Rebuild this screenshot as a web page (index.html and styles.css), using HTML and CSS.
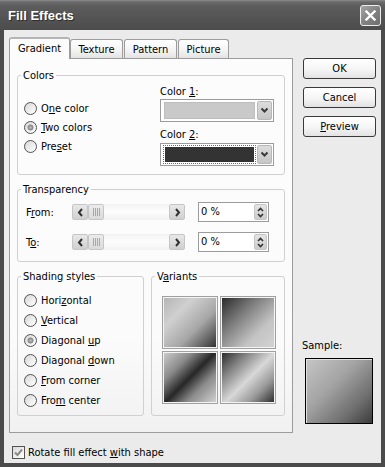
FILE: index.html
```html
<!DOCTYPE html>
<html>
<head>
<meta charset="utf-8">
<title>Fill Effects</title>
<link rel="stylesheet" href="styles.css">
</head>
<body>
<div class="window">
  <div class="titlebar">
    <span class="title">Fill Effects</span>
    <div class="close"><svg width="11" height="11" viewBox="0 0 11 11"><path d="M1.5 1.5 L9.5 9.5 M9.5 1.5 L1.5 9.5" stroke="#fff" stroke-width="2.3" stroke-linecap="square"/></svg></div>
  </div>
  <div class="client">
    <div class="tabs">
      <div class="tab tab-gradient active">Gradient</div>
      <div class="tab tab-texture">Texture</div>
      <div class="tab tab-pattern">Pattern</div>
      <div class="tab tab-picture">Picture</div>
    </div>

    <div class="panel">
      <fieldset class="group">
        <legend>Colors</legend>
        <div class="colors-body">
          <div class="radios colors-radios">
            <div class="radio"><span class="rb"></span><span>O<u>n</u>e color</span></div>
            <div class="radio"><span class="rb checked"></span><span><u>T</u>wo colors</span></div>
            <div class="radio"><span class="rb"></span><span>Pre<u>s</u>et</span></div>
          </div>
          <div class="pickers">
            <div class="lbl">Color <u>1</u>:</div>
            <div class="combo">
              <span class="swatch swatch-light"></span>
              <span class="drop"><svg width="9" height="7" viewBox="0 0 9 7"><path d="M1.5 1.5 L4.5 4.5 L7.5 1.5" fill="none" stroke="#3a3a3a" stroke-width="2"/></svg></span>
            </div>
            <div class="lbl lbl2">Color <u>2</u>:</div>
            <div class="combo combo2">
              <span class="swatch swatch-dark"></span>
              <span class="drop"><svg width="9" height="7" viewBox="0 0 9 7"><path d="M1.5 1.5 L4.5 4.5 L7.5 1.5" fill="none" stroke="#3a3a3a" stroke-width="2"/></svg></span>
            </div>
          </div>
        </div>
      </fieldset>

      <fieldset class="group">
        <legend>Transparency</legend>
        <div class="trows">
          <div class="trow">
            <span class="tlabel">F<u>r</u>om:</span>
            <div class="scroll">
              <span class="sbtn"><svg width="7" height="9" viewBox="0 0 7 9"><path d="M5 1 L2 4.5 L5 8" fill="none" stroke="#333" stroke-width="2"/></svg></span>
              <span class="sbtn thumb"><svg width="7" height="8" viewBox="0 0 7 8"><path d="M0.5 0 V8 M2.5 0 V8 M4.5 0 V8 M6.5 0 V8" stroke="#a8a8a8" stroke-width="1"/></svg></span>
              <span class="track"></span>
              <span class="sbtn"><svg width="7" height="9" viewBox="0 0 7 9"><path d="M2 1 L5 4.5 L2 8" fill="none" stroke="#333" stroke-width="2"/></svg></span>
            </div>
            <div class="spin">
              <span class="spin-text">0 %</span>
              <span class="spin-btn">
                <svg width="7" height="5" viewBox="0 0 7 5"><path d="M1 4 L3.5 1.5 L6 4" fill="none" stroke="#333" stroke-width="1.6"/></svg>
                <svg width="7" height="5" viewBox="0 0 7 5"><path d="M1 1 L3.5 3.5 L6 1" fill="none" stroke="#333" stroke-width="1.6"/></svg>
              </span>
            </div>
          </div>
          <div class="trow">
            <span class="tlabel">T<u>o</u>:</span>
            <div class="scroll">
              <span class="sbtn"><svg width="7" height="9" viewBox="0 0 7 9"><path d="M5 1 L2 4.5 L5 8" fill="none" stroke="#333" stroke-width="2"/></svg></span>
              <span class="sbtn thumb"><svg width="7" height="8" viewBox="0 0 7 8"><path d="M0.5 0 V8 M2.5 0 V8 M4.5 0 V8 M6.5 0 V8" stroke="#a8a8a8" stroke-width="1"/></svg></span>
              <span class="track"></span>
              <span class="sbtn"><svg width="7" height="9" viewBox="0 0 7 9"><path d="M2 1 L5 4.5 L2 8" fill="none" stroke="#333" stroke-width="2"/></svg></span>
            </div>
            <div class="spin">
              <span class="spin-text">0 %</span>
              <span class="spin-btn">
                <svg width="7" height="5" viewBox="0 0 7 5"><path d="M1 4 L3.5 1.5 L6 4" fill="none" stroke="#333" stroke-width="1.6"/></svg>
                <svg width="7" height="5" viewBox="0 0 7 5"><path d="M1 1 L3.5 3.5 L6 1" fill="none" stroke="#333" stroke-width="1.6"/></svg>
              </span>
            </div>
          </div>
        </div>
      </fieldset>

      <div class="lower">
        <fieldset class="group">
          <legend>Shading styles</legend>
          <div class="radios shading-radios">
            <div class="radio r20"><span class="rb"></span><span>Hori<u>z</u>ontal</span></div>
            <div class="radio r20"><span class="rb"></span><span><u>V</u>ertical</span></div>
            <div class="radio r20"><span class="rb checked"></span><span>Diagonal <u>u</u>p</span></div>
            <div class="radio r20"><span class="rb"></span><span>Diagonal <u>d</u>own</span></div>
            <div class="radio r20"><span class="rb"></span><span><u>F</u>rom corner</span></div>
            <div class="radio r20"><span class="rb"></span><span>Fro<u>m</u> center</span></div>
          </div>
        </fieldset>
        <fieldset class="group">
          <legend>V<u>a</u>riants</legend>
          <div class="variants">
            <span class="tile tile1"></span>
            <span class="tile tile2"></span>
            <span class="tile tile3"></span>
            <span class="tile tile4"></span>
          </div>
        </fieldset>
      </div>
    </div>

    <div class="side">
      <div class="btn">OK</div>
      <div class="btn">Cancel</div>
      <div class="btn"><u>P</u>review</div>
      <div class="sample">
        <div class="sample-label">Sample:</div>
        <div class="sample-box"></div>
      </div>
    </div>

    <div class="bottom">
      <span class="cb"><svg width="9" height="9" viewBox="0 0 9 9"><path d="M1 4.5 L3.5 7 L8 1.5" fill="none" stroke="#8a8a8a" stroke-width="2"/></svg></span>
      <span>Rotate fill effect <u>w</u>ith shape</span>
    </div>
  </div>
</div>
</body>
</html>
```

FILE: styles.css
```css
* { box-sizing: border-box; }
html, body { margin: 0; padding: 0; }
body {
  width: 385px;
  height: 467px;
  overflow: hidden;
  font-family: "DejaVu Sans Condensed", "Liberation Sans", Arial, sans-serif;
  font-size: 11px;
  line-height: 13px;
  color: #000;
  background: #4b4b4b;
}
u { text-decoration: underline; text-underline-offset: 1px; }

.window {
  width: 385px;
  height: 467px;
  display: flex;
  flex-direction: column;
  background: #4b4b4b;
}

.titlebar {
  height: 30px;
  flex: none;
  display: flex;
  align-items: center;
  justify-content: space-between;
  padding: 0 4px 0 8px;
  background: linear-gradient(#8c8c8c 0, #6a6a6a 2px, #5c5c5c 6px, #545454 18px, #4c4c4c 30px);
}
.title {
  color: #fff;
  font-family: "Liberation Sans", Arial, sans-serif;
  font-weight: bold;
  font-size: 13px;
  text-shadow: 1px 1px #2e2e2e;
}
.close {
  width: 21px;
  height: 21px;
  border: 1px solid #eeeeee;
  border-radius: 3px;
  background: linear-gradient(135deg, #a4a4a4, #808080 55%, #6e6e6e);
  display: flex;
  align-items: center;
  justify-content: center;
}

.client {
  flex: 1;
  margin: 0 4px 4px;
  background: #ebebeb;
  display: grid;
  grid-template-columns: 284px 73px;
  grid-template-rows: 21px 1fr 30px;
  column-gap: 10px;
  padding: 7px 0 0 5px;
}

/* tabs */
.tabs {
  grid-column: 1;
  grid-row: 1;
  display: flex;
  align-items: flex-end;
  position: relative;
  z-index: 1;
}
.tab {
  height: 19px;
  border: 1px solid #9c9c9c;
  border-bottom: none;
  border-radius: 3px 3px 0 0;
  background: linear-gradient(#ffffff, #f3f3f3 60%, #e3e3e3);
  text-align: center;
  line-height: 19px;
}
.tab.active {
  height: 22px;
  margin-bottom: -1px;
  background: #fcfcfc;
  border-top: 2px solid #b4b4b4;
  line-height: 19px;
}
.tab-gradient { width: 61px; }
.tab-texture { width: 53px; }
.tab-pattern { width: 53px; margin-left: 1px; }
.tab-picture { width: 51px; margin-left: 1px; }

/* panel */
.panel {
  grid-column: 1;
  grid-row: 2;
  border: 1px solid #9c9c9c;
  background: linear-gradient(#fcfcfc, #fbfbfb 75%, #f1f1f1);
  padding: 10px 7px 0;
  display: flex;
  flex-direction: column;
  gap: 8px;
}

fieldset.group {
  margin: 0;
  padding: 0;
  border: 1px solid #d0d0d0;
  border-radius: 3px;
  min-width: 0;
}
legend {
  margin-left: 3px;
  padding: 0 2px;
  line-height: 13px;
}

.colors-body {
  display: grid;
  grid-template-columns: 1fr 114px;
  padding: 0 10px 8px 6px;
}
.colors-radios { padding-top: 17px; }
.radio {
  display: flex;
  align-items: center;
  gap: 4px;
  height: 19px;
}
.radio.r20 { height: 20px; }
.rb {
  flex: none;
  width: 13px;
  height: 13px;
  border-radius: 50%;
  border: 1px solid #525252;
  background: linear-gradient(135deg, #d6d6d6, #eeeeee 55%, #ffffff);
}
.rb.checked {
  background:
    radial-gradient(circle at 50% 50%, #c4c4c4 0, #9a9a9a 1.5px, #858585 2.6px, rgba(133,133,133,0) 3.4px),
    linear-gradient(135deg, #d6d6d6, #eeeeee 55%, #ffffff);
}

.pickers { padding-top: 3px; }
.lbl { height: 13px; }
.lbl2 { margin-top: 6px; }
.combo {
  height: 23px;
  margin-top: 1px;
  border: 1px solid #9c9c9c;
  background: #fff;
  padding: 1px;
  display: flex;
  gap: 2px;
}
.combo2 { margin-top: 2px; }
.swatch {
  flex: 1;
  margin: 1px 0 1px 2px;
}
.swatch-light { background: #c9c9c9; border: 1px solid #bdbdbd; }
.swatch-dark {
  background: #333333;
  outline: 1px dotted #6a6a6a;
  outline-offset: 0px;
  border: 1px solid #fff;
  box-shadow: inset 0 0 0 1px #333;
}
.drop {
  width: 15px;
  flex: none;
  border: 1px solid #b8b8b8;
  border-radius: 2px;
  background: linear-gradient(#dcdcdc, #c6c6c6);
  display: flex;
  align-items: center;
  justify-content: center;
}

/* transparency */
.trows {
  display: flex;
  flex-direction: column;
  gap: 10px;
  padding: 6px 0 9px;
}
.trow {
  display: flex;
  align-items: center;
  height: 20px;
  padding-left: 8px;
}
.tlabel { width: 46px; flex: none; }
.scroll {
  width: 113px;
  height: 16px;
  display: flex;
  margin-right: 13px;
  flex: none;
}
.sbtn {
  width: 16px;
  height: 16px;
  flex: none;
  border: 1px solid #c6c6c6;
  border-radius: 2px;
  background: linear-gradient(#e8e8e8, #d0d0d0);
  display: flex;
  align-items: center;
  justify-content: center;
}
.thumb { background: linear-gradient(#ececec, #dadada); }
.track {
  flex: 1;
  background: linear-gradient(#f3f3f3, #fdfdfd 50%, #f2f2f2);
}
.spin {
  width: 71px;
  height: 20px;
  flex: none;
  border: 1px solid #9c9c9c;
  background: #fff;
  display: flex;
  padding: 1px;
}
.spin-text { flex: 1; padding-left: 1px; line-height: 16px; }
.spin-btn {
  width: 13px;
  flex: none;
  border: 1px solid #c6c6c6;
  border-radius: 2px;
  background: linear-gradient(#e4e4e4, #cccccc);
  display: flex;
  flex-direction: column;
  align-items: center;
  justify-content: center;
  gap: 1px;
}

/* lower groups */
.lower {
  display: grid;
  grid-template-columns: 127px 1fr;
  column-gap: 7px;
}
.shading-radios { padding: 7px 0 3px 6px; }
.variants {
  display: grid;
  grid-template-columns: 56px 56px;
  grid-template-rows: 53px 53px;
  gap: 2px;
  padding: 13px 0 11px 10px;
}
.tile {
  border: 1px solid #a0a0a0;
  box-shadow: inset 0 0 0 1px #f4f4f4;
}
.tile1 { background: linear-gradient(135deg, #b4b4b4 0%, #d0d0d0 30%, #a6a6a6 62%, #2c2c2c 100%); }
.tile2 { background: linear-gradient(135deg, #262626 0%, #7a7a7a 35%, #c4c4c4 70%, #d4d4d4 100%); }
.tile3 { background: linear-gradient(135deg, #cfcfcf 0%, #8a8a8a 28%, #262626 50%, #8a8a8a 70%, #d6d6d6 100%); }
.tile4 { background: linear-gradient(135deg, #262626 0%, #8a8a8a 28%, #d8d8d8 52%, #9a9a9a 74%, #262626 100%); }

/* side column */
.side {
  grid-column: 2;
  grid-row: 2;
  display: flex;
  flex-direction: column;
  padding-bottom: 9px;
}
.btn {
  height: 21px;
  margin-bottom: 8px;
  border: 1px solid #3a3a3a;
  border-radius: 3px;
  background: linear-gradient(#ffffff, #f5f5f5 55%, #e2e2e2);
  text-align: center;
  line-height: 19px;
}
.sample { margin-top: auto; }
.sample-label { margin-left: -1px; margin-bottom: 6px; }
.sample-box {
  width: 68px;
  height: 66px;
  margin-left: 2px;
  border: 1px solid #000;
  box-shadow: inset 1px 1px 0 #e0e0e0;
  background: linear-gradient(135deg, #c6c6c6 0%, #a4a4a4 40%, #6e6e6e 75%, #3c3c3c 100%);
}

/* bottom */
.bottom {
  grid-column: 1 / span 2;
  grid-row: 3;
  display: flex;
  align-items: center;
  padding-top: 8px;
  gap: 3px;
}
.cb {
  width: 13px;
  height: 13px;
  margin-left: 3px;
  border: 1px solid #525252;
  background: linear-gradient(135deg, #d6d6d6, #f0f0f0 55%, #ffffff);
  display: flex;
  align-items: center;
  justify-content: center;
}
```
